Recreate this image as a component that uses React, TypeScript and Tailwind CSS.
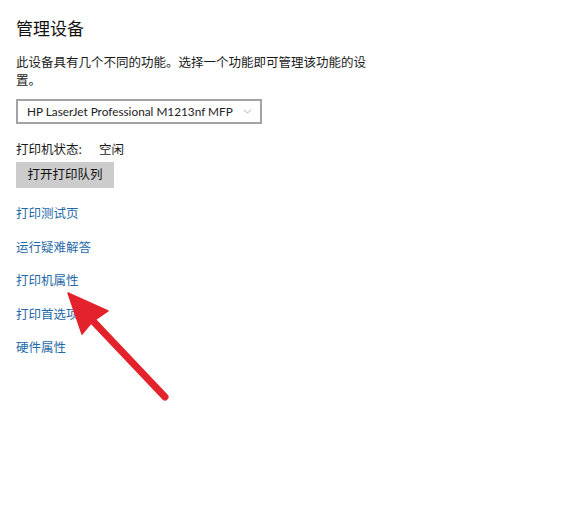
import { ChevronDown } from 'lucide-react';

const links = ['打印测试页', '运行疑难解答', '打印机属性', '打印首选项', '硬件属性'];

export default function App() {
  return (
    <div className="relative w-[577px] h-[505px] bg-white overflow-hidden text-[#1a1a1a] font-['Noto_Sans','Noto_Sans_CJK_SC',sans-serif]">
      <div className="pl-4 pt-[17px]">
        <h1 className="text-[17px] leading-[24px] font-normal text-[#111]">管理设备</h1>

        <p className="mt-[13px] w-[356px] text-[12.5px] leading-[18px]">
          此设备具有几个不同的功能。选择一个功能即可管理该功能的设置。
        </p>

        {/* printer select */}
        <div className="mt-[9px] flex items-center justify-between w-[246px] h-[25px] border-2 border-[#a3a3a3] pl-[9px] pr-[6px]">
          <span className="whitespace-nowrap font-['Lato',sans-serif] text-[11.8px] leading-none text-[#222]">
            HP LaserJet Professional M1213nf MFP
          </span>
          <ChevronDown className="h-[13px] w-[13px] shrink-0 text-[#9a9a9a]" strokeWidth={1.5} />
        </div>

        <div className="mt-[17px] flex text-[12.5px] leading-[18px]">
          <span className="w-[83px]">打印机状态:</span>
          <span>空闲</span>
        </div>

        <button className="mt-[3px] w-[98px] h-[26px] bg-[#cccccc] text-[12.5px] text-[#111]">
          打开打印队列
        </button>

        <div className="mt-[17px] flex flex-col gap-[15.5px]">
          {links.map((l) => (
            <a key={l} className="w-fit text-[12.5px] leading-[18px] text-[#1f6aa8] cursor-pointer">
              {l}
            </a>
          ))}
        </div>
      </div>

      {/* red annotation arrow */}
      <svg className="absolute left-0 top-0 pointer-events-none" width="577" height="505">
        <line x1="92" y1="320" x2="165" y2="397" stroke="#e3222b" strokeWidth="7" strokeLinecap="round" />
        <polygon points="68,293 82,334 92,322 108,311" fill="#e3222b" stroke="#e3222b" strokeWidth="1.5" strokeLinejoin="round" />
      </svg>
    </div>
  );
}
